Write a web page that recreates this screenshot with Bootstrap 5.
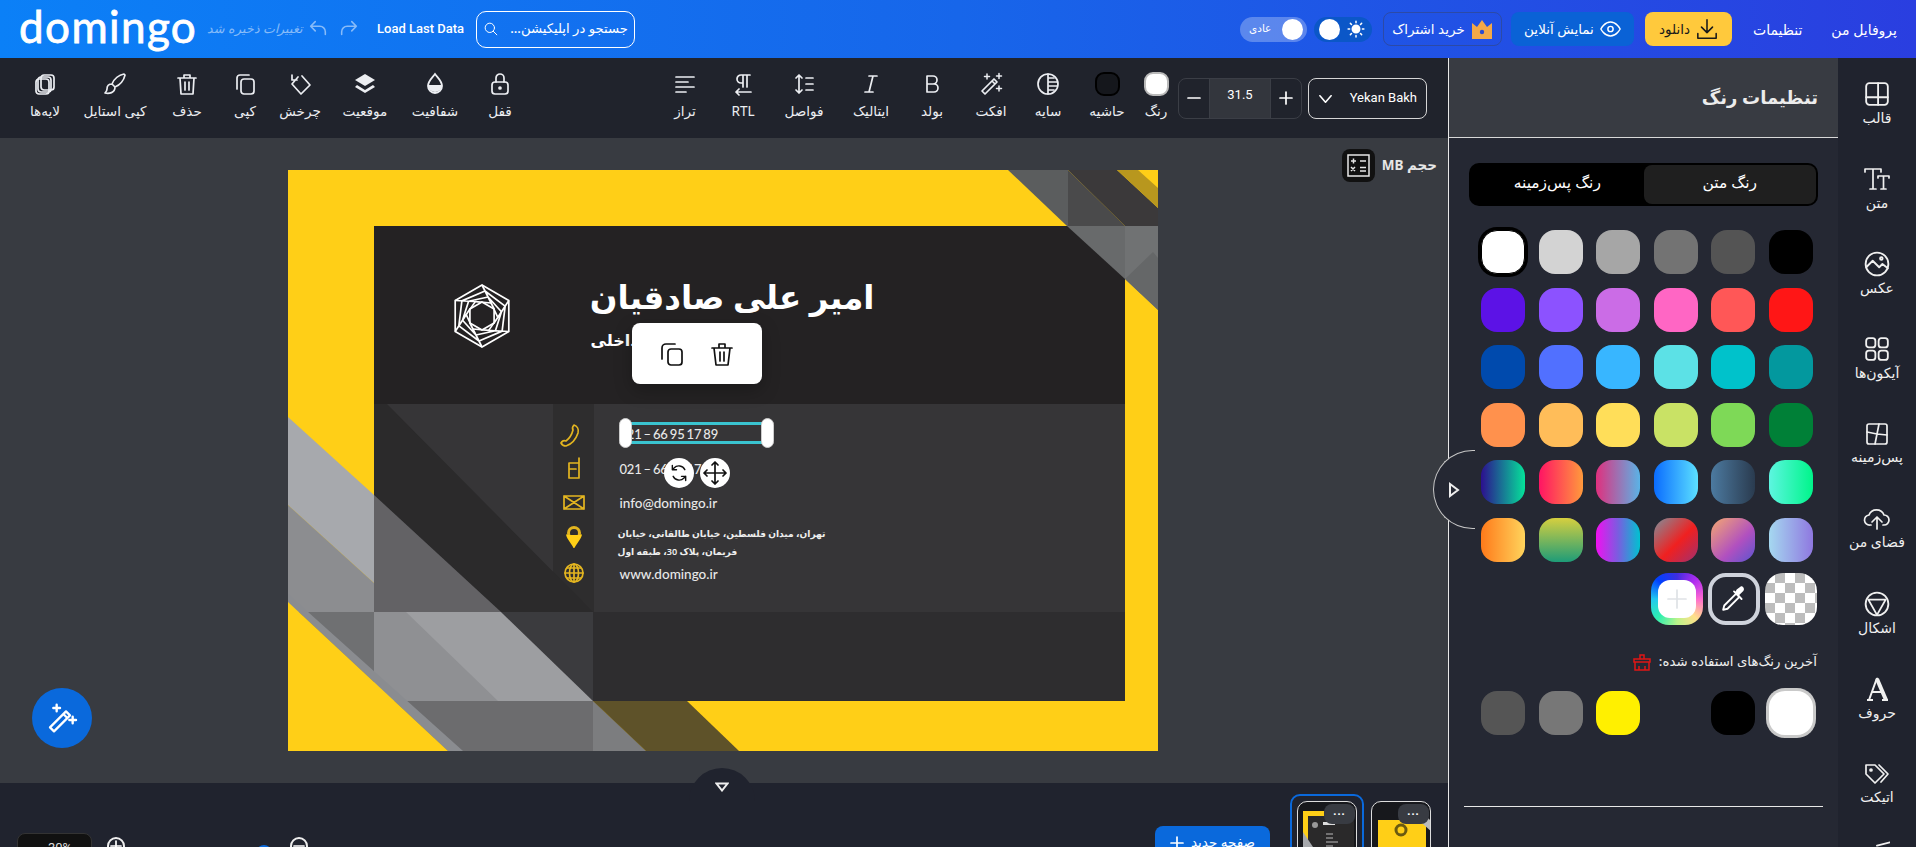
<!doctype html>
<html lang="fa">
<head>
<meta charset="utf-8">
<title>domingo</title>
<link rel="stylesheet" href="https://cdn.jsdelivr.net/npm/bootstrap@5.3.0/dist/css/bootstrap.min.css">
<style>
html,body{height:847px;overflow:hidden;margin:0;background:#20232e;color:#fff;font-family:"Noto Sans","DejaVu Sans",sans-serif;}
.app{width:1916px;height:847px;overflow:hidden;}
svg{display:block;}
.ic{fill:none;stroke:currentColor;stroke-width:1.7;stroke-linecap:round;stroke-linejoin:round;}
.top-bar{height:58px;flex:none;background:linear-gradient(90deg,#0b80f7,#1766ea 50%,#2a3ee0);padding-left:19px;padding-right:19px;}
.brand{font-family:Lato,"Liberation Sans",sans-serif;font-size:44px;line-height:58px;letter-spacing:1.4px;font-weight:400;width:173px;margin-top:-6px;-webkit-text-stroke:.8px #fff;}
.saved{font-size:12.5px;color:rgba(255,255,255,.5);width:102px;margin-left:8px;white-space:nowrap;font-style:italic;}
.hist{color:rgba(255,255,255,.5);width:31px;}
.hist-first{margin-left:5px;}
.load{font-family:Roboto,"Liberation Sans",sans-serif;font-size:13px;font-weight:500;margin-left:8px;width:99px;white-space:nowrap;}
.finder{width:159px;height:37px;border:1px solid #fff;border-radius:10px;padding:0 6px 0 7px;font-size:13.2px;font-weight:500;white-space:nowrap;}
.mode-pill{width:67px;height:25px;border-radius:13px;background:rgba(255,255,255,.28);font-size:10.5px;padding:0 4px 0 9px;}
.knob{width:21px;height:21px;border-radius:50%;background:#fff;display:block;}
.sun-pill{width:58px;height:25px;border-radius:13px;background:#0b57c8;margin-left:7px;padding:0 7px 0 5px;}
.h-btn{height:34px;border-radius:8px;font-size:13.5px;font-weight:500;white-space:nowrap;padding:0;gap:6px;}
.h-sub{width:119px;border:1.5px solid #2c4aa6;margin-left:11px;}
.h-live{width:123px;background:#0a62d6;margin-left:9px;}
.h-dl{width:87px;background:#ffc93c;color:#1a1a1a;margin-left:11px;}
.h-link{font-size:14px;font-weight:500;white-space:nowrap;}
.h-link-a{margin-left:21px;}
.h-link-b{margin-left:29px;}
.work{width:1448px;flex:none;}
.tools{height:80px;flex:none;background:#20232c;padding-left:15px;padding-right:21px;}
.grid-l{display:grid;grid-template-columns:60px 80px 64px 52px 58px 72px 68px 62px;}
.grid-r{display:grid;grid-template-columns:74px 42px 80px 54px 68px 50px 64px 54px 44px;}
.t-item{display:flex;flex-direction:column;align-items:center;height:58px;font-size:13.6px;white-space:nowrap;color:#eceef2;}
.t-item svg,.t-item .t-sw{margin-top:3px;margin-bottom:4px;height:24px;flex:none;}
.t-lab{line-height:22px;}
.t-item .t-sw{width:25px;border-radius:9px;}
.sw-w{background:#fff;border:2px solid #b9b9b9;}
.sw-k{background:#15171c;border:2px solid #000;}
.step{width:124px;height:41px;border:1px solid #3b3e46;border-radius:8px;overflow:hidden;margin-right:6px;}
.step>div{height:100%;}
.step-mid{width:62px;flex:none;background:#33363d;border-left:1px solid #3b3e46;border-right:1px solid #3b3e46;padding-bottom:6px;font-family:Roboto,sans-serif;font-size:13px;}
.pick{width:119px;height:41px;border:1px solid #d6d6d6;border-radius:8px;padding:0 9px 0 10px;font-family:Roboto,sans-serif;font-size:13px;}
.stage{background:#383b41;padding-top:32px;padding-right:3px;min-height:0;}
.sheet{width:870px;height:581px;position:relative;flex:none;}
.sheet>svg{position:absolute;left:0;top:0;}
.c-name{position:absolute;right:283px;top:102px;font-size:32.5px;font-weight:700;line-height:50px;white-space:nowrap;}
.c-job{position:absolute;left:303px;top:158px;font-size:16px;font-weight:700;line-height:24px;white-space:nowrap;}
.c-t{position:absolute;left:332px;font-family:Lato,sans-serif;font-size:13.5px;line-height:20px;color:#e8e8e8;white-space:nowrap;font-weight:500;}
.c-tel{font-size:13px;word-spacing:-1px;letter-spacing:-.2px;}
.row-a{top:254px;}
.row-b{top:289px;}
.row-c{top:323px;}
.row-e{top:394px;}
.c-addr{position:absolute;left:330px;width:208px;top:355px;font-size:9.1px;line-height:18px;color:#eee;font-weight:600;white-space:nowrap;text-align:right;}
.c-addr span{display:block;text-align:left;}
.pop{position:absolute;left:344px;top:153px;width:130px;height:61px;background:#fff;border-radius:8px;box-shadow:0 6px 18px rgba(0,0,0,.25);color:#111;gap:26px;}
.sel{position:absolute;left:331px;top:248px;width:155px;height:30px;}
.sel-box{position:absolute;left:6px;right:6px;top:4px;bottom:4px;border-top:3.5px solid #3ac4d0;border-bottom:3.5px solid #3ac4d0;}
.grip{position:absolute;top:0;width:13px;height:30px;background:#fff;border-radius:7px;border:1px solid #ccc;}
.grip-l{left:0;}
.grip-r{right:0;}
.round{position:absolute;width:30px;height:30px;border-radius:50%;background:#fff;color:#111;top:288px;}
.round-a{left:376px;}
.round-b{left:412px;}
.size-box{position:absolute;right:11px;top:11px;color:#e6e6e6;font-size:13.5px;font-weight:700;gap:7px;white-space:nowrap;}
.calc{width:33px;height:33px;background:#111;border-radius:8px;}
.magic{position:absolute;left:32px;top:550px;width:60px;height:60px;border-radius:50%;background:#0a69dc;color:#fff;}
.foot{height:64px;flex:none;background:#20232e;position:relative;overflow:visible;}
.foot-tab{position:absolute;left:689px;top:-15px;width:66px;height:40px;border-radius:33px 33px 0 0;background:#20232e;}
.foot-tab svg{margin-top:14px;}
.zoom-box{position:absolute;left:17px;top:50px;width:75px;height:40px;background:#111;border:1px solid #333;border-radius:8px;font-size:13px;padding:4px 0 0 30px;color:#ddd;font-family:Roboto,sans-serif;}
.zc{position:absolute;top:54px;width:18px;height:18px;border:2px solid #eee;border-radius:50%;}
.zc-a{left:107px;}
.zc-b{left:290px;}
.thumb-dot{position:absolute;left:256px;top:62px;width:16px;height:16px;border-radius:50%;background:#0a69dc;}
.new-page{position:absolute;left:1155px;top:43px;width:115px;height:40px;background:#0a69dc;border-radius:8px;font-size:13.5px;font-weight:500;padding-top:6px;gap:7px;align-items:flex-start;white-space:nowrap;}
.new-page svg{margin-top:4px;}
.pg-on{position:absolute;left:1290px;top:11px;width:74px;height:70px;border:2px solid #0a69dc;border-radius:10px;}
.pg{position:absolute;top:18px;width:60px;height:60px;border:1px solid #ddd;border-radius:10px;background:#17181c;overflow:hidden;}
.pg-a{left:1297px;}
.pg-b{left:1371px;}
.pg-more{position:absolute;top:21px;width:31px;height:20px;background:#383b42;border-radius:8px;font-size:11px;line-height:14px;letter-spacing:1px;text-align:center;font-weight:700;}
.more-a{left:1324px;}
.more-b{left:1398px;}
.side{width:390px;flex:none;border-left:1px solid #e8e8e8;background:#252833;position:relative;}
.side-head{height:80px;background:#383b42;border-bottom:1px solid #d8d8d8;padding-right:20px;font-size:18px;font-weight:700;color:#ececec;}
.seg{margin:25px 20px 0 20px;height:43px;background:#000;border-radius:10px;padding:2px;font-size:15.5px;font-weight:500;}
.seg>div{flex:1 1 0;border-radius:8px;padding-bottom:3px;}
.seg-on{background:#1f1f1f;}
.swatches{display:grid;grid-template-columns:repeat(6,44px);grid-auto-rows:44px;gap:13.6px;margin:24px 0 0 32px;width:332px;}
.sq{width:44px;height:44px;border-radius:16px;display:block;}
.sq-sel{box-shadow:0 0 0 3px #000;border:1px solid #000;}
.sq-last{box-shadow:0 0 0 3px #c9c9c9;}
.tools3{gap:5px;margin:11px 21px 0 0;}
.big{width:52px;height:52px;border-radius:18px;}
.rainbow{background:conic-gradient(#3e2ee0,#b02bf0,#ff6ad0,#ffe08a,#b9f38a,#2ff0b0,#20c8f0,#0040ff,#3e2ee0);padding:7px;}
.rainbow>span{display:flex;height:100%;background:#fff;border-radius:12px;color:#dfe2e6;}
.dropper{border:4px solid #cfd3dc;color:#fff;}
.clear{background:repeating-conic-gradient(#bdbdbd 0 25%,#fff 0 50%) 0 0/20px 20px;}
.recent-t{margin:28px 21px 0 0;font-size:13.3px;font-weight:500;white-space:nowrap;gap:8px;color:#eee;height:18px;}
.swatches.recent{margin-top:20px;}
.rule{height:1px;background:#e8e8e8;margin:71px 15px 0 15px;}
.handle{position:absolute;left:-16px;top:392px;width:42px;height:79px;background:#252833;border:1px solid #c8c8c8;border-right:0;border-radius:40px 0 0 40px;}
.handle svg{margin-left:14px;}
.rail{width:78px;flex:none;background:#20232e;padding-top:4px;}
.r-item{height:85px;flex:none;display:flex;flex-direction:column;align-items:center;justify-content:center;font-size:14px;line-height:20px;color:#f0f0f0;white-space:nowrap;gap:1px;font-weight:500;}
.r-stub{justify-content:flex-start;padding-top:10px;}
</style>
</head>
<body>
<div class="app d-flex flex-column">
  <header class="top-bar d-flex align-items-center">
    <div class="brand">domingo</div>
    <div class="saved" dir="rtl">تغییرات ذخیره شد</div>
    <div class="hist hist-first"><svg class="ic" width="22" height="22" viewBox="0 0 24 24"><path d="M9 4 4 9l5 5M4 9h10a6 6 0 0 1 6 6v3"/></svg></div>
    <div class="hist"><svg class="ic" width="22" height="22" viewBox="0 0 24 24"><path d="m15 4 5 5-5 5M20 9H10a6 6 0 0 0-6 6v3"/></svg></div>
    <div class="load">Load Last Data</div>
    <div class="finder d-flex align-items-center justify-content-between">
      <svg class="ic" width="14" height="14" viewBox="0 0 24 24"><circle cx="10" cy="10" r="8"/><path d="m16 16 6 6"/></svg>
      <span dir="rtl">جستجو در اپلیکیشن...</span>
    </div>
    <div class="flex-grow-1"></div>
    <div class="mode-pill d-flex align-items-center justify-content-between"><span dir="rtl">عادی</span><span class="knob"></span></div>
    <div class="sun-pill d-flex align-items-center justify-content-between"><span class="knob"></span>
      <svg width="18" height="18" viewBox="0 0 24 24" fill="#fff" stroke="#fff" stroke-width="2" stroke-linecap="round"><circle cx="12" cy="12" r="5"/><path d="M12 1.500v2M12 20.500v2M1.500 12h2M20.500 12h2M4.500 4.500l1.500 1.500M18 18l1.500 1.500M4.500 19.500 6 18M18 6l1.500-1.500"/></svg>
    </div>
    <div class="h-btn h-sub d-flex align-items-center justify-content-center"><span dir="rtl">خرید اشتراک</span>
      <svg width="22" height="20" viewBox="0 0 22 20"><path d="M1 4 6 8 11 1l5 7 5-4v16H1z" fill="#f4a948"/><circle cx="11" cy="13" r="2.200" fill="#2b4bd0"/></svg>
    </div>
    <div class="h-btn h-live d-flex align-items-center justify-content-center"><span dir="rtl">نمایش آنلاین</span>
      <svg class="ic" width="21" height="18" viewBox="0 0 24 20"><path d="M1 10s4-8 11-8 11 8 11 8-4 8-11 8S1 10 1 10z"/><circle cx="12" cy="10" r="3"/></svg>
    </div>
    <div class="h-btn h-dl d-flex align-items-center justify-content-center"><span dir="rtl">دانلود</span>
      <svg class="ic" width="22" height="22" viewBox="0 0 24 24" stroke-width="2.600"><path d="M12 2v14M6 10l6 6 6-6M2 17v5h20v-5"/></svg>
    </div>
    <div class="h-link h-link-a" dir="rtl">تنظیمات</div>
    <div class="h-link h-link-b" dir="rtl">پروفایل من</div>
  </header>

  <div class="d-flex flex-grow-1" style="min-height:0">
    <div class="work d-flex flex-column">
      <div class="tools d-flex align-items-center">
        <div class="grid-l">
          <div class="t-item"><svg class="ic" width="24" height="24" viewBox="0 0 24 24"><rect x="8" y="3" width="13" height="15" rx="3"/><rect x="5" y="5" width="13" height="15" rx="3"/><rect x="3" y="7" width="13" height="15" rx="3"/></svg><span class="t-lab">لایه‌ها</span></div>
          <div class="t-item"><svg class="ic" width="24" height="24" viewBox="0 0 24 24"><path d="M21 2c-5 1-10 5-12 10l3 3c5-2 9-7 10-12zM9 12c-3 0-5 2-5 5 0 2-1 3-2 4 4 1 10 0 10-6"/></svg><span class="t-lab">کپی استایل</span></div>
          <div class="t-item"><svg class="ic" width="24" height="24" viewBox="0 0 24 24"><path d="M3 6h18M9 6V3h6v3M5 6l1 16h12l1-16M10 10v8M14 10v8"/></svg><span class="t-lab">حذف</span></div>
          <div class="t-item"><svg class="ic" width="24" height="24" viewBox="0 0 24 24"><rect x="8" y="7" width="13" height="15" rx="3"/><path d="M16 3H7a3 3 0 0 0-3 3v11"/></svg><span class="t-lab">کپی</span></div>
          <div class="t-item"><svg class="ic" width="24" height="24" viewBox="0 0 24 24"><path d="m14 4 8 9-9 9-9-10 6-7M4 3v5h5"/></svg><span class="t-lab">چرخش</span></div>
          <div class="t-item"><svg width="24" height="24" viewBox="0 0 24 24"><path d="m12 2 10 6-10 6L2 8z" fill="#eceef2"/><path d="m4 13-2 2 10 6 10-6-2-2-8 5z" fill="#eceef2"/></svg><span class="t-lab">موقعیت</span></div>
          <div class="t-item"><svg width="24" height="24" viewBox="0 0 24 24"><path d="M5 13h14a7 7 0 0 1-14 0z" fill="#eceef2"/><path d="M12 2c3 4 7 7 7 12a7 7 0 0 1-14 0c0-5 4-8 7-12z" fill="none" stroke="#eceef2" stroke-width="1.800"/></svg><span class="t-lab">شفافیت</span></div>
          <div class="t-item"><svg class="ic" width="24" height="24" viewBox="0 0 24 24"><rect x="4" y="10" width="16" height="12" rx="3"/><path d="M8 10V6a4 4 0 0 1 8 0v4"/><circle cx="12" cy="16" r="1" fill="currentColor"/></svg><span class="t-lab">قفل</span></div>
        </div>
        <div class="flex-grow-1"></div>
        <div class="grid-r">
          <div class="t-item"><svg class="ic" width="24" height="24" viewBox="0 0 24 24"><path d="M3 5h18M3 10h12M3 15h18M3 20h10"/></svg><span class="t-lab">تراز</span></div>
          <div class="t-item"><svg class="ic" width="24" height="24" viewBox="0 0 24 24"><path d="M19 3H10a4 4 0 0 0 0 8h2M12 3v12M16 3v12M20 20H5M8 17l-3 3 3 3"/></svg><span class="t-lab">RTL</span></div>
          <div class="t-item"><svg class="ic" width="24" height="24" viewBox="0 0 24 24"><path d="M7 3v18M4 6l3-3 3 3M4 18l3 3 3-3M14 6h7M14 12h7M14 18h7"/></svg><span class="t-lab">فواصل</span></div>
          <div class="t-item"><svg class="ic" width="24" height="24" viewBox="0 0 24 24"><path d="M10 4h8M6 20h8M14 4l-4 16"/></svg><span class="t-lab">ایتالیک</span></div>
          <div class="t-item"><svg class="ic" width="24" height="24" viewBox="0 0 24 24"><path d="M7 4h6a4 4 0 0 1 0 8H7zM7 12h7a4 4 0 0 1 0 8H7z"/></svg><span class="t-lab">بولد</span></div>
          <div class="t-item"><svg class="ic" width="24" height="24" viewBox="0 0 24 24"><path d="m3 19 12-12 3 3L6 22zM13 9l3 3"/><path d="M8 2v5M5.500 4.500h5M20 1.500v5M17.500 4h5M20 14v5M17.500 16.500h5" stroke-width="1.500"/></svg><span class="t-lab">افکت</span></div>
          <div class="t-item"><svg class="ic" width="24" height="24" viewBox="0 0 24 24"><circle cx="12" cy="12" r="10"/><path d="M12 2v20M12 6h6M12 10h9M12 14h9M12 18h6"/></svg><span class="t-lab">سایه</span></div>
          <div class="t-item"><span class="t-sw sw-k"></span><span class="t-lab">حاشیه</span></div>
          <div class="t-item"><span class="t-sw sw-w"></span><span class="t-lab">رنگ</span></div>
        </div>
        <div class="step d-flex">
          <div class="flex-grow-1 d-flex align-items-center justify-content-center"><svg class="ic" width="14" height="14" viewBox="0 0 14 14" stroke-width="1.200"><path d="M1 7h12"/></svg></div>
          <div class="step-mid d-flex align-items-center justify-content-center">31.5</div>
          <div class="flex-grow-1 d-flex align-items-center justify-content-center"><svg class="ic" width="14" height="14" viewBox="0 0 14 14" stroke-width="1.200"><path d="M1 7h12M7 1v12"/></svg></div>
        </div>
        <div class="pick d-flex align-items-center justify-content-between">
          <svg class="ic" width="13" height="13" viewBox="0 0 14 14" stroke-width="1.200"><path d="m1 4 6 7 6-7"/></svg>
          <span>Yekan Bakh</span>
        </div>
      </div>

      <div class="stage flex-grow-1 position-relative d-flex justify-content-center align-items-start">
        <div class="sheet">
          <svg width="870" height="581" viewBox="0 0 870 581">
            <rect width="870" height="581" fill="#ffcf17"/>
            <!-- left and lower band -->
            <polygon points="0,247 86,325 86,413 0,335" fill="#a7a9ad"/>
            <polygon points="0,335 86,413 86,442 0,442" fill="#8c8d90"/>
            <polygon points="0,442 86,442 86,531 0,531" fill="#6f7072"/>
            <!-- dark card -->
            <rect x="86" y="56" width="751" height="178" fill="#242223"/>
            <rect x="86" y="234" width="751" height="208" fill="#363537"/>
            <rect x="86" y="442" width="751" height="89" fill="#2e2d2f"/>
            <rect x="265" y="234" width="41" height="208" fill="#2e2d2e"/>
            <polygon points="86,234 99,234 305,442 213,442 86,325" fill="#2b2a2b"/>
            <polygon points="86,325 213,442 86,442" fill="#636265"/>
            <polygon points="213,442 305,442 305,531" fill="#3b3b3e"/>
            <polygon points="86,442 213,442 305,531 86,531" fill="#9d9ea1"/>
            <polygon points="86,442 118,442 210,531 86,531" fill="#8f9093"/>
            <polygon points="86,531 305,531 358,581 86,581" fill="#6c6c6e"/>
            <polygon points="305,531 358,581 305,581" fill="#7c7d7f"/>
            <polygon points="305,531 399,531 451,581 358,581" fill="#5e5229"/>
            <polygon points="0,424 175,581 160,581 0,432" fill="#8a8c90"/>
            <polygon points="0,432 160,581 0,581" fill="#ffcf17"/>
            <!-- top right band -->
            <polygon points="720,0 780,0 780,56 779,56" fill="#5b5d5e"/>
            <polygon points="780,0 837,56 780,56" fill="#4a4a4b"/>
            <polygon points="780,0 829,0 870,38 870,56 837,56" fill="#3b393a"/>
            <polygon points="829,0 850,0 870,18 870,38" fill="#b8971e"/>
            <polygon points="779,56 837,56 837,109" fill="#686a6b"/>
            <polygon points="837,56 870,56 870,140 837,109" fill="#707273"/>
            <polygon points="837,109 865,82 870,88 870,140" fill="#656768"/>
            <!-- logo -->
            <g transform="translate(194,146)" fill="none" stroke="#fff" stroke-width="1.700">
              <polygon points="0,-31 26.800,-15.500 26.800,15.500 0,31 -26.800,15.500 -26.800,-15.500"/>
              <polygon points="0,-14 12.100,-7 12.100,7 0,14 -12.100,7 -12.100,-7"/>
              <g id="hx"><path d="M0,-31L12.100,-7M3.030,-25L23.100,-9.900M6.050,-19L19.450,-4.250M9.080,-13L15.800,1.400"/></g>
              <use href="#hx" transform="rotate(60)"/><use href="#hx" transform="rotate(120)"/><use href="#hx" transform="rotate(180)"/><use href="#hx" transform="rotate(240)"/><use href="#hx" transform="rotate(300)"/>
            </g>
            <!-- contact icons -->
            <g fill="none" stroke="#e3b520" stroke-width="1.700" stroke-linejoin="round" stroke-linecap="round">
              <path d="M286,255c3 1 5 4 4 8-2 6-6 11-12 13-2 0-4-1-5-3 1-2 3-3 5-2 4-3 6-7 7-11-1-2-1-3 1-5z"/>
              <path d="M281,293h10v15h-10zM281,299h7M291,293v-5"/>
              <path d="M276,326h20v13h-20zM276,326l20 13M296,326l-20 13"/>
              <circle cx="286" cy="363" r="5.500" stroke-width="3"/><path d="M279,365c1 4 5 8 7 12 2-4 6-8 7-12" fill="#ffcf17" stroke="#ffcf17"/>
              <circle cx="286" cy="403" r="9"/><path d="M277,403h18M286,394v18M279,398h14M279,408h14"/><ellipse cx="286" cy="403" rx="4.500" ry="9"/>
            </g>
          </svg>
          <div class="c-name" dir="rtl">امیر علی صادقیان</div>
          <div class="c-job" dir="rtl">طراح داخلی</div>
          <div class="c-t c-tel row-a">021 – 66 95 17 89</div>
          <div class="c-t c-tel row-b">021 – 66 95 17 89</div>
          <div class="c-t row-c">info@domingo.ir</div>
          <div class="c-addr" dir="rtl">تهران، میدان فلسطین، خیابان طالقانی، خیابان<span>فریمان، پلاک 30، طبقه اول</span></div>
          <div class="c-t row-e">www.domingo.ir</div>
          <div class="pop d-flex align-items-center justify-content-center">
            <svg class="ic" width="24" height="28" viewBox="0 0 24 26"><rect x="8" y="8" width="14" height="16" rx="3"/><path d="M15 3H6a4 4 0 0 0-4 4v11"/></svg>
            <svg class="ic" width="24" height="28" viewBox="0 0 24 26"><path d="M2 7h20M9 7V3h6v4M4 7l2 17h12l2-17M10 11v9M14 11v9"/></svg>
          </div>
          <div class="sel"><div class="sel-box"></div><span class="grip grip-l"></span><span class="grip grip-r"></span></div>
          <div class="round round-a d-flex align-items-center justify-content-center"><svg class="ic" width="20" height="20" viewBox="0 0 24 24" stroke-width="2.400"><path d="M19 8a8 8 0 0 0-13-2L4 8M4 3v5h5M5 16a8 8 0 0 0 13 2l2-2M20 21v-5h-5"/></svg></div>
          <div class="round round-b d-flex align-items-center justify-content-center"><svg class="ic" width="24" height="24" viewBox="0 0 24 24" stroke-width="2.200"><path d="M12 1v22M1 12h22M9 4l3-3 3 3M9 20l3 3 3-3M4 9l-3 3 3 3M20 9l3 3-3 3"/></svg></div>
        </div>
        <div class="size-box position-absolute d-flex align-items-center">
          <div class="calc d-flex align-items-center justify-content-center"><svg width="23" height="23" viewBox="0 0 23 23" fill="none" stroke="#e8e8e8" stroke-width="1.500"><rect x="1" y="1" width="21" height="21"/><path d="M4 7h5M6.500 4.500v5M13 7h6M4 13l4 4M8 13l-4 4M13 13.500h6M13 17h6"/></svg></div>
          <span dir="rtl">حجم MB</span>
        </div>
        <div class="magic d-flex align-items-center justify-content-center"><svg class="ic" width="32" height="32" viewBox="0 0 24 24"><path d="m3 19 12-12 3 3L6 22zM13 9l3 3"/><path d="M8 2v5M5.500 4.500h5M20 11v5M17.500 13.500h5" stroke-width="1.800"/></svg></div>
      </div>

      <div class="foot">
        <div class="foot-tab d-flex justify-content-center"><svg width="14" height="10" viewBox="0 0 14 10"><path d="M1.500 1.500h11L7 8.500z" fill="none" stroke="#eee" stroke-width="2"/></svg></div>
        <div class="zoom-box">30%</div>
        <div class="zc zc-a d-flex align-items-center justify-content-center"><svg class="ic" width="12" height="12" viewBox="0 0 12 12"><path d="M1 6h10M6 1v10"/></svg></div>
        <div class="thumb-dot"></div>
        <div class="zc zc-b d-flex align-items-center justify-content-center"><svg class="ic" width="12" height="12" viewBox="0 0 12 12"><path d="M1 6h10"/></svg></div>
        <div class="new-page d-flex justify-content-center"><svg class="ic" width="14" height="14" viewBox="0 0 14 14"><path d="M1 7h12M7 1v12"/></svg><span dir="rtl">صفحه جدید</span></div>
        <div class="pg-on"></div>
        <div class="pg pg-a"><svg width="60" height="60" viewBox="0 0 60 60"><rect x="5" y="9" width="50" height="51" fill="#ffcf17"/><rect x="10" y="14" width="46" height="42" fill="#2a292a"/><circle cx="17" cy="23" r="3" fill="#999"/><rect x="25" y="20" width="12" height="3" fill="#ddd"/><polygon points="5,30 25,60 10,60 5,50" fill="#a7a9ad"/><path d="M28 32h7M28 36h7M28 40h12M28 44h7" stroke="#bbb"/></svg></div>
        <div class="pg-more more-a">...</div>
        <div class="pg pg-b"><svg width="60" height="60" viewBox="0 0 60 60"><rect x="6" y="18" width="48" height="42" fill="#ffcf17"/><circle cx="29" cy="28" r="5" fill="none" stroke="#6a5a10" stroke-width="3"/><polygon points="50,10 60,20 60,30 44,16" fill="#bbb"/></svg></div>
        <div class="pg-more more-b">...</div>
      </div>
    </div>

    <aside class="side">
      <div class="side-head d-flex align-items-center justify-content-end"><span dir="rtl">تنظیمات رنگ</span></div>
      <div class="seg d-flex"><div class="d-flex align-items-center justify-content-center" dir="rtl">رنگ پس‌زمینه</div><div class="seg-on d-flex align-items-center justify-content-center" dir="rtl">رنگ متن</div></div>
      <div class="swatches">
        <span class="sq sq-sel" style="background:#fff"></span><span class="sq" style="background:#d3d3d3"></span><span class="sq" style="background:#a6a6a6"></span><span class="sq" style="background:#737373"></span><span class="sq" style="background:#545454"></span><span class="sq" style="background:#000"></span>
        <span class="sq" style="background:#5c12e6"></span><span class="sq" style="background:#8c52ff"></span><span class="sq" style="background:#cb6ce6"></span><span class="sq" style="background:#ff66c4"></span><span class="sq" style="background:#ff5757"></span><span class="sq" style="background:#ff1616"></span>
        <span class="sq" style="background:#004aad"></span><span class="sq" style="background:#5170ff"></span><span class="sq" style="background:#38b6ff"></span><span class="sq" style="background:#5ce1e6"></span><span class="sq" style="background:#00c2cb"></span><span class="sq" style="background:#03989e"></span>
        <span class="sq" style="background:#ff914d"></span><span class="sq" style="background:#ffbd59"></span><span class="sq" style="background:#ffde59"></span><span class="sq" style="background:#c9e265"></span><span class="sq" style="background:#7ed957"></span><span class="sq" style="background:#008037"></span>
        <span class="sq" style="background:linear-gradient(90deg,#2c0f8f,#05e29a)"></span><span class="sq" style="background:linear-gradient(90deg,#ff1464,#ff9a3c)"></span><span class="sq" style="background:linear-gradient(90deg,#e0307e,#5ab3e6)"></span><span class="sq" style="background:linear-gradient(90deg,#0a6cff,#5ce0ff)"></span><span class="sq" style="background:linear-gradient(90deg,#4c7aa0,#2a3b4f)"></span><span class="sq" style="background:linear-gradient(90deg,#5df5e0,#00f58a)"></span>
        <span class="sq" style="background:linear-gradient(90deg,#ff7a1a,#ffd45c)"></span><span class="sq" style="background:linear-gradient(180deg,#d6cf3f,#1e9c78)"></span><span class="sq" style="background:linear-gradient(90deg,#f010f0,#7a5de0,#00c2d0)"></span><span class="sq" style="background:linear-gradient(135deg,#808f9a,#f02020 55%,#a03070)"></span><span class="sq" style="background:linear-gradient(135deg,#f5a870,#b050c0 60%,#5a55d0)"></span><span class="sq" style="background:linear-gradient(90deg,#a5d8f0,#8f78e0)"></span>
      </div>
      <div class="tools3 d-flex justify-content-end">
        <div class="big rainbow"><span class="align-items-center justify-content-center"><svg class="ic" width="22" height="22" viewBox="0 0 22 22" stroke-width="1"><path d="M2 11h18M11 2v18"/></svg></span></div>
        <div class="big dropper d-flex align-items-center justify-content-center"><svg class="ic" width="26" height="26" viewBox="0 0 24 24" stroke-width="1.500"><path d="m14 7-11 11-1 4 4-1L17 10z"/><path d="m12 5 7 7M16 8l4-4a2 2 0 0 0-1-3l-4 3-1 2z" fill="#fff"/></svg></div>
        <div class="big clear"></div>
      </div>
      <div class="recent-t d-flex align-items-center justify-content-end">
        <svg width="18" height="18" viewBox="0 0 18 18" fill="none" stroke="#e01616" stroke-width="1.500"><path d="M7 6V2h4v4M1 6h16v3H1zM2 9v8h14V9M6 13v4M12 13v4"/></svg>
        <span dir="rtl">آخرین رنگ‌های استفاده شده:</span>
      </div>
      <div class="swatches recent">
        <span class="sq" style="background:#555"></span><span class="sq" style="background:#777"></span><span class="sq" style="background:#fff000"></span><span class="sq" style="background:transparent"></span><span class="sq" style="background:#000"></span><span class="sq sq-last" style="background:#fff"></span>
      </div>
      <div class="rule"></div>
      <div class="handle d-flex align-items-center"><svg width="12" height="16" viewBox="0 0 12 16"><path d="M2 2v12l8-6z" fill="none" stroke="#eee" stroke-width="2"/></svg></div>
    </aside>

    <nav class="rail d-flex flex-column align-items-center">
      <div class="r-item"><svg class="ic" width="26" height="26" viewBox="0 0 24 24"><rect x="2" y="2" width="20" height="20" rx="3"/><path d="M13 2v20M2 15h20"/></svg><span>قالب</span></div>
      <div class="r-item"><svg class="ic" width="28" height="26" viewBox="0 0 28 24"><path d="M2 5V2h16v3M10 2v20M7 22h6M15 11V9h11v2M20.500 9v13M18 22h5"/></svg><span>متن</span></div>
      <div class="r-item"><svg class="ic" width="26" height="26" viewBox="0 0 24 24"><circle cx="12" cy="12" r="10.500"/><path d="M2 15 8 9l6 6 3-3 5 4"/><circle cx="16" cy="7" r="1.200"/></svg><span>عکس</span></div>
      <div class="r-item"><svg class="ic" width="26" height="26" viewBox="0 0 24 24"><rect x="2" y="2" width="8.500" height="8.500" rx="2.500"/><rect x="13.500" y="2" width="8.500" height="8.500" rx="2.500"/><rect x="2" y="13.500" width="8.500" height="8.500" rx="2.500"/><rect x="13.500" y="13.500" width="8.500" height="8.500" rx="2.500"/></svg><span>آیکون‌ها</span></div>
      <div class="r-item"><svg class="ic" width="24" height="24" viewBox="0 0 24 24"><rect x="2" y="2" width="20" height="20" rx="2"/><path d="M14 2 12 12l10 1M12 12l-2 10M2 10l10 2"/></svg><span>پس‌زمینه</span></div>
      <div class="r-item"><svg class="ic" width="28" height="24" viewBox="0 0 28 24"><path d="M8 18H7a5 5 0 0 1-1-10 8 8 0 0 1 15 0 5 5 0 0 1 0 10h-1M14 22V10M9 15l5-5 5 5"/></svg><span>فضای من</span></div>
      <div class="r-item"><svg class="ic" width="26" height="26" viewBox="0 0 24 24"><circle cx="12" cy="12" r="10.500"/><path d="M4 8h16l-8 14z"/></svg><span>اشکال</span></div>
      <div class="r-item"><svg width="26" height="26" viewBox="0 0 26 26"><path d="M13 2 5 24M13 2l9 22M3 24h6M18 24h6M8 16h11" fill="none" stroke="#f0f0f0" stroke-width="2"/><path d="M13 3l9 21" stroke="#f0f0f0" stroke-width="4"/></svg><span>حروف</span></div>
      <div class="r-item"><svg class="ic" width="28" height="24" viewBox="0 0 28 24"><path d="M3 3h9l9 9-9 9-9-9zM16 3l9 9-7 8"/><circle cx="8" cy="8" r="1"/></svg><span>اتیکت</span></div>
      <div class="r-item r-stub"><svg class="ic" width="26" height="26" viewBox="0 0 24 24"><path d="M12 8 24 5"/></svg></div>
    </nav>
  </div>
</div>
</body>
</html>
